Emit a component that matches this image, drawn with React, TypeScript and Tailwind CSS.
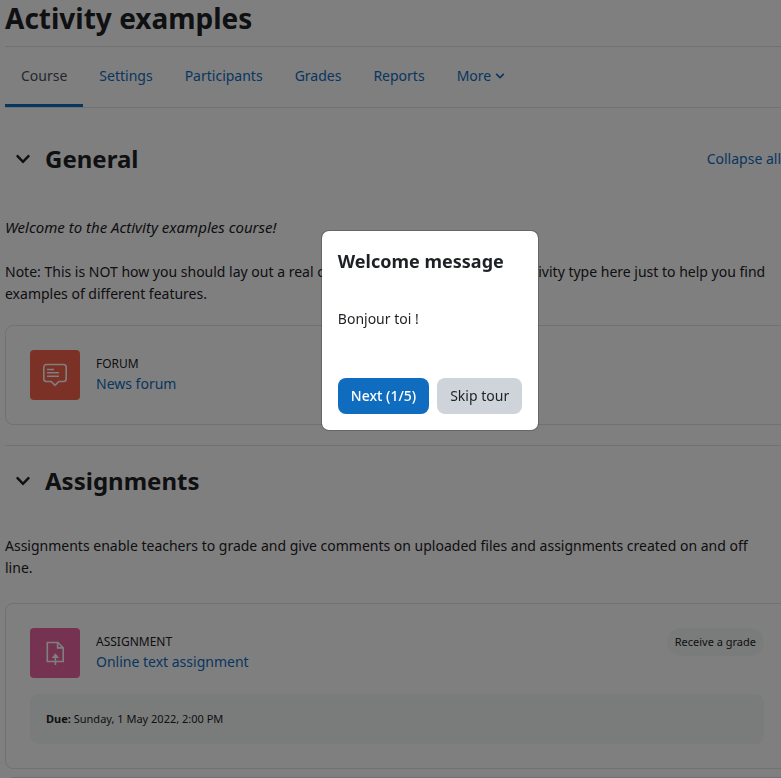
import type { ReactNode } from "react";
import { FaChevronDown } from "react-icons/fa";

const tabs = ["Course", "Settings", "Participants", "Grades", "Reports"];

const ForumIcon = () => (
  <svg viewBox="0 0 24 24" className="size-6" fill="none" stroke="white" strokeWidth="1.6">
    <path d="M3.5 1.5h17a2.7 2.7 0 0 1 2.7 2.7v11.6a2.7 2.7 0 0 1-2.7 2.7h-4.7L12 22.3l-3.8-3.8H3.5a2.7 2.7 0 0 1-2.7-2.7V4.2a2.7 2.7 0 0 1 2.7-2.7z" />
    <path d="M4 6.5h7M4 9.8h12M4 13.3h12" />
  </svg>
);

const AssignIcon = () => (
  <svg viewBox="0 0 24 24" className="size-6" fill="none" stroke="white" strokeWidth="1.6">
    <path d="M4.3 1.5h10.5l5.4 5.4v13.6H4.3z" />
    <path d="M14.6 1.5v5.4h5.6" />
    <path d="M12.4 24V15" />
    <path d="M12.4 12.2l3.7 4.8H8.7z" fill="white" stroke="none" />
  </svg>
);

const SectionTitle = ({ children }: { children: ReactNode }) => (
  <div className="flex items-center">
    <button type="button" aria-label="Toggle section" className="grid size-9 place-items-center">
      <FaChevronDown className="size-4" />
    </button>
    <h2 className="ml-1 text-2xl leading-9 font-bold">{children}</h2>
  </div>
);

type ActivityProps = {
  icon: ReactNode;
  color: string;
  type: string;
  name: string;
  badge?: string;
  children?: ReactNode;
};

const Activity = ({ icon, color, type, name, badge, children }: ActivityProps) => (
  <article className="rounded-lg border border-[#dee2e6] p-6">
    <div className="flex items-start">
      <div className={`grid size-[50px] shrink-0 place-items-center rounded-sm ${color}`}>{icon}</div>
      <div className="ml-4 flex-1 pt-1">
        <div className="text-xs leading-5 uppercase">{type}</div>
        <a href="#" className="block leading-5 text-[#0f6cbf]">
          {name}
        </a>
      </div>
      {badge && <span className="rounded-full bg-[#f5f9f8] px-2 text-[11px] leading-7">{badge}</span>}
    </div>
    {children}
  </article>
);

const App = () => {
  return (
    <div className="h-screen overflow-hidden bg-white font-['Noto_Sans',sans-serif] text-sm text-[#1d2125]">
      <main className="-mr-2 ml-[5px]">
        <h1 className="pb-2.5 text-[28px] leading-9 font-bold">Activity examples</h1>
        <nav className="flex h-[62px] border-y border-[#dee2e6]">
          {tabs.map((tab, index) => (
            <a
              key={tab}
              href="#"
              className={
                index === 0
                  ? "flex items-center border-b-3 border-[#0f6cbf] px-4 text-[#495057]"
                  : "flex items-center border-b-3 border-transparent px-4 text-[#0f6cbf]"
              }
            >
              {tab}
            </a>
          ))}
          <button type="button" className="flex items-center gap-1 border-b-3 border-transparent px-4 text-[#0f6cbf]">
            More <FaChevronDown className="size-2.5" />
          </button>
        </nav>

        <section className="pt-[33px]">
          <div className="flex items-center justify-between pr-2">
            <SectionTitle>General</SectionTitle>
            <a href="#" className="text-[#0f6cbf]">
              Collapse all
            </a>
          </div>
          <div className="pt-[39px] pr-5 pb-5 leading-[22px]">
            <p className="mb-[23px] text-[15px] leading-[22px] italic">Welcome to the Activity examples course!</p>
            <p>
              Note: This is NOT how you should lay out a real course. We added one of each activity type here just to
              help you find examples of different features.
            </p>
          </div>
          <Activity icon={<ForumIcon />} color="bg-[#f7634d]" type="Forum" name="News forum" />
        </section>

        <section className="mt-5 border-t border-[#dee2e6] pt-[17px]">
          <SectionTitle>Assignments</SectionTitle>
          <p className="pt-9 pr-5 pb-6 leading-[22px]">
            Assignments enable teachers to grade and give comments on uploaded files and assignments created on and off
            line.
          </p>
          <Activity
            icon={<AssignIcon />}
            color="bg-[#eb66a2]"
            type="Assignment"
            name="Online text assignment"
            badge="Receive a grade"
          >
            <div className="mt-4 rounded-lg bg-[#f5f9f8] p-4 text-[11px] leading-[18px]">
              <strong>Due:</strong> Sunday, 1 May 2022, 2:00 PM
            </div>
          </Activity>
          <div className="mt-2 h-24 rounded-lg border border-[#dee2e6]" />
        </section>
      </main>

      {/* tour step over the dimmed page */}
      <div className="fixed inset-0 grid place-items-center bg-black/50 pb-[117px] pl-[79px]">
        <div
          role="dialog"
          aria-labelledby="tour-title"
          className="rounded-lg border border-black/20 bg-white bg-clip-padding p-4"
        >
          <h3 id="tour-title" className="text-lg leading-7 font-bold">
            Welcome message
          </h3>
          <p className="pt-8 pb-[47px] leading-6">Bonjour toi !</p>
          <div className="flex gap-2">
            <button type="button" className="h-9 rounded-lg bg-[#0f6cbf] px-[13px] font-medium text-white">
              Next (1/5)
            </button>
            <button type="button" className="h-9 rounded-lg bg-[#ced4da] px-[13px]">
              Skip tour
            </button>
          </div>
        </div>
      </div>
    </div>
  );
};

export default App;
